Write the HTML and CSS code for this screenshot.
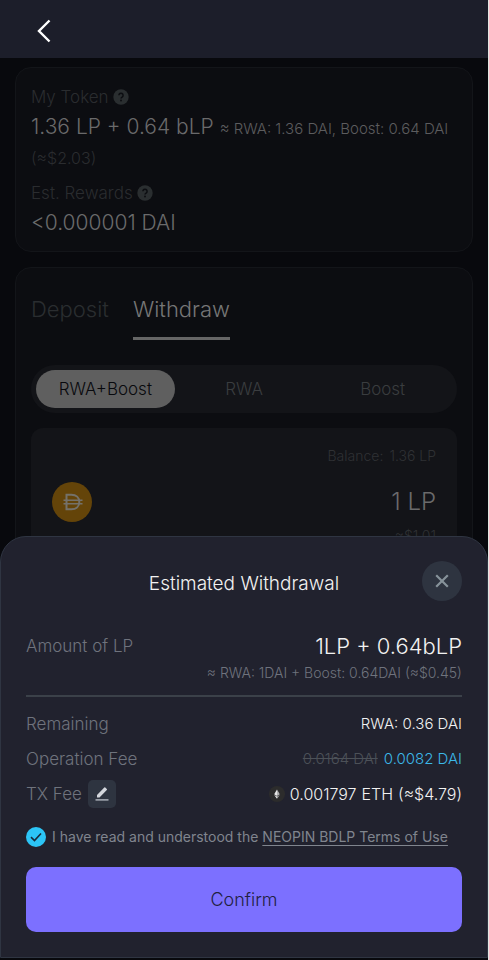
FILE: index.html
```html
<!DOCTYPE html>
<html lang="en">
<head>
<meta charset="utf-8">
<meta name="viewport" content="width=device-width, initial-scale=1">
<title>Withdraw</title>
<link rel="stylesheet" href="styles.css">
</head>
<body>
<div class="app">
  <header class="topbar">
    <button class="back" type="button" aria-label="Back">
      <svg width="16" height="24" viewBox="0 0 16 24" fill="none" stroke="#fff" stroke-width="2.4"><path d="M13.500 1.500 3 12l10.500 10.500"/></svg>
    </button>
  </header>

  <main class="content">
    <section class="card summary">
      <h2 class="label">My Token
        <svg class="help" viewBox="0 0 16 16"><circle cx="8" cy="8" r="7.700" fill="#2a2e30"/><path d="M5.900 6.300a2.100 2.100 0 1 1 3.200 1.800c-.8.5-1.100.8-1.100 1.500" fill="none" stroke="#0c0d11" stroke-width="1.500"/><circle cx="8" cy="11.500" r=".95" fill="#0c0d11"/></svg>
      </h2>
      <p class="value">1.36 LP + 0.64 bLP <span class="approx">≈ RWA: 1.36 DAI, Boost: 0.64 DAI</span> <span class="usd">(≈$2.03)</span></p>
      <h2 class="label">Est. Rewards
        <svg class="help" viewBox="0 0 16 16"><circle cx="8" cy="8" r="7.700" fill="#2a2e30"/><path d="M5.900 6.300a2.100 2.100 0 1 1 3.200 1.800c-.8.5-1.100.8-1.100 1.500" fill="none" stroke="#0c0d11" stroke-width="1.500"/><circle cx="8" cy="11.500" r=".95" fill="#0c0d11"/></svg>
      </h2>
      <p class="value">&lt;0.000001 DAI</p>
    </section>

    <section class="card">
      <nav class="tabs">
        <button class="tab" type="button">Deposit</button>
        <button class="tab active" type="button">Withdraw</button>
      </nav>
      <div class="segments">
        <button class="segment active" type="button">RWA+Boost</button>
        <button class="segment" type="button">RWA</button>
        <button class="segment" type="button">Boost</button>
      </div>
      <div class="panel">
        <p class="balance"><span>Balance:</span><span>1.36 LP</span></p>
        <div class="amount">
          <svg class="dai" viewBox="0 0 40 40"><circle cx="20" cy="20" r="20" fill="#644409"/><g fill="none" stroke="#74716a" stroke-width="2"><path d="M14.500 12.700h4.800c5 0 8 3 8 7.300s-3 7.300-8 7.300h-4.800z"/><path d="M11.500 18.200h19M11.500 21.800h19" stroke-width="1.500"/></g></svg>
          <span>1 LP</span>
        </div>
        <p class="fiat">≈$1.01</p>
      </div>
    </section>
  </main>

  <section class="sheet" role="dialog" aria-labelledby="sheet-title">
    <header class="sheet-head">
      <h1 id="sheet-title">Estimated Withdrawal</h1>
      <button class="close" type="button" aria-label="Close">
        <svg width="14" height="14" viewBox="0 0 14 14" stroke="#87939a" stroke-width="2.200"><path d="M1.200 1.200 12.800 12.800M12.800 1.200 1.200 12.800"/></svg>
      </button>
    </header>

    <div class="row total">
      <span class="name">Amount of LP</span>
      <strong>1LP + 0.64bLP</strong>
    </div>
    <p class="detail">≈ RWA: 1DAI + Boost: 0.64DAI (≈$0.45)</p>

    <div class="fees">
      <div class="row"><span class="name">Remaining</span><span>RWA: 0.36 DAI</span></div>
      <div class="row"><span class="name">Operation Fee</span><span class="discount"><del>0.0164 DAI</del><span>0.0082 DAI</span></span></div>
      <div class="row">
        <span class="name">TX Fee
          <button class="edit" type="button" aria-label="Edit fee">
            <svg width="14" height="14" viewBox="0 0 14 14"><path d="M2 10.400V7.900L9.300.6q.5-.5 1 0l1.500 1.500q.5.500 0 1L4.500 10.400z" fill="#d3d6dc"/><path d="M.5 12.900h13" stroke="#b3b8c0" stroke-width="1.400"/></svg>
          </button>
        </span>
        <span class="gas">
          <svg width="16" height="16" viewBox="0 0 16 16"><circle cx="8" cy="8" r="8" fill="#2c2c2c"/><path d="M8 3.500 5.200 8.300 8 10z" fill="#e8e8e8"/><path d="M8 3.500 10.800 8.300 8 10z" fill="#b5b5b5"/><path d="M5.200 9 8 12.700V10.600z" fill="#eee"/><path d="M10.800 9 8 12.700V10.600z" fill="#aaa"/></svg>
          <span>0.001797</span><span>ETH</span><span>(≈$4.79)</span>
        </span>
      </div>
    </div>

    <div class="terms">
      <input id="agree" type="checkbox" checked>
      <label for="agree">I have read and understood the <a href="#terms">NEOPIN BDLP Terms of Use</a></label>
    </div>
    <button class="confirm" type="button">Confirm</button>
  </section>
</div>
</body>
</html>
```
FILE: styles.css
```css
* { box-sizing: border-box; }

body {
  margin: 0;
  padding-right: 1px;
  background: #e3e6e2;
  font-family: Inter, "Liberation Sans", sans-serif;
  font-weight: 300;
}

h1, h2, p { margin: 0; font-weight: 300; }

button {
  margin: 0;
  padding: 0;
  border: 0;
  background: none;
  color: inherit;
  font: inherit;
}

svg { display: block; flex: none; }

.app {
  position: relative;
  height: 100vh;
  overflow: hidden;
  background: #08090d;
}

.topbar {
  display: flex;
  align-items: center;
  height: 58px;
  padding: 4px 36px 0;
  background: #1c1e2a;
}

.content {
  display: grid;
  gap: 15px;
  padding: 9px 15px;
}

.card {
  padding: 18px 15px 13px;
  border: 1px solid #131519;
  border-radius: 16px;
  background: #0c0d11;
}

.label {
  display: flex;
  align-items: center;
  gap: 4px;
  color: #2a2c2f;
  font-size: 17px;
  line-height: 22px;
}

.help { width: 16px; height: 16px; }

.value {
  margin-top: 4px;
  color: #6a6a6b;
  font-size: 21px;
  line-height: 30px;
}

.value + .label { margin-top: 10px; }

.approx { color: #5c5c5e; font-size: 15px; line-height: 20px; }

.usd { color: #2a2c2f; font-size: 16px; line-height: 20px; }

.tabs { display: flex; gap: 24px; }

.tab {
  height: 54px;
  padding-bottom: 6px;
  color: #2a2d30;
  font-size: 22px;
  border-bottom: 3px solid transparent;
}

.tab.active { color: #767676; border-color: #666; }

.segments {
  display: grid;
  grid-template-columns: repeat(3, 1fr);
  height: 48px;
  margin-top: 25px;
  padding: 5px;
  border-radius: 24px;
  background: #131418;
  color: #3a3d3f;
  font-size: 17px;
}

.segment.active {
  border-radius: 19px;
  background: #5f5f5f;
  color: #08090d;
}

.panel {
  margin-top: 15px;
  padding: 18px 21px;
  border-radius: 12px;
  background: #131418;
  color: #2f3134;
  font-size: 14px;
  line-height: 20px;
}

.balance { display: flex; justify-content: flex-end; gap: 6px; }

.amount {
  display: flex;
  align-items: center;
  justify-content: space-between;
  margin-top: 16px;
  color: #6a6a6b;
  font-size: 24px;
}

.dai { width: 40px; height: 40px; }

.fiat { margin-top: 4px; text-align: right; }

.sheet {
  position: absolute;
  right: 0;
  bottom: 2px;
  left: 0;
  padding: 24px 25px 25px;
  border: 1px solid #2f3542;
  border-radius: 26px 26px 0 0;
  background: #21222e;
  color: #f2f2f2;
}

.sheet-head {
  display: grid;
  grid-template-columns: 40px 1fr 40px;
  align-items: center;
}

.sheet-head h1 {
  grid-column: 2;
  margin-top: 6px;
  font-size: 19px;
  line-height: 24px;
  text-align: center;
}

.close {
  display: grid;
  place-items: center;
  width: 40px;
  height: 40px;
  border-radius: 50%;
  background: #2e3440;
}

.row {
  display: flex;
  align-items: center;
  justify-content: space-between;
  font-size: 15px;
}

.name {
  display: flex;
  align-items: center;
  gap: 6px;
  color: #6f737d;
  font-size: 17px;
}

.total { height: 30px; margin-top: 30px; }

.total strong { font-size: 22px; font-weight: 300; }

.detail {
  margin-top: 2px;
  padding-bottom: 12px;
  border-bottom: 2px solid #3b4149;
  color: #6f737d;
  font-size: 14px;
  line-height: 20px;
  text-align: right;
}

.fees { margin-top: 9px; }

.fees .row { height: 35px; }

.discount { display: flex; gap: 6px; color: #3cb8e8; }

.discount del { color: #4c5158; }

.edit {
  display: grid;
  place-items: center;
  width: 28px;
  height: 28px;
  border-radius: 5px;
  background: #2e3440;
}

.gas { display: flex; align-items: center; gap: 5px; font-size: 16px; }

.terms {
  display: flex;
  align-items: center;
  gap: 6px;
  margin-top: 16px;
  color: #80858e;
  font-size: 14px;
  font-weight: 400;
  line-height: 20px;
}

.terms input {
  flex: none;
  appearance: none;
  width: 20px;
  height: 20px;
  margin: 0;
  border-radius: 50%;
  background: #2cc5f6 url("data:image/svg+xml,%3Csvg xmlns='http://www.w3.org/2000/svg' viewBox='0 0 20 20'%3E%3Cpath d='M5 10.200l3.500 3.300L15 6.500' fill='none' stroke='%23182a3a' stroke-width='1.600'/%3E%3C/svg%3E");
}

.terms a { color: inherit; text-underline-offset: 3px; }

.confirm {
  display: block;
  width: 100%;
  height: 65px;
  margin-top: 20px;
  border-radius: 10px;
  background: #7c70ff;
  color: #22213f;
  font-size: 18px;
}
```
